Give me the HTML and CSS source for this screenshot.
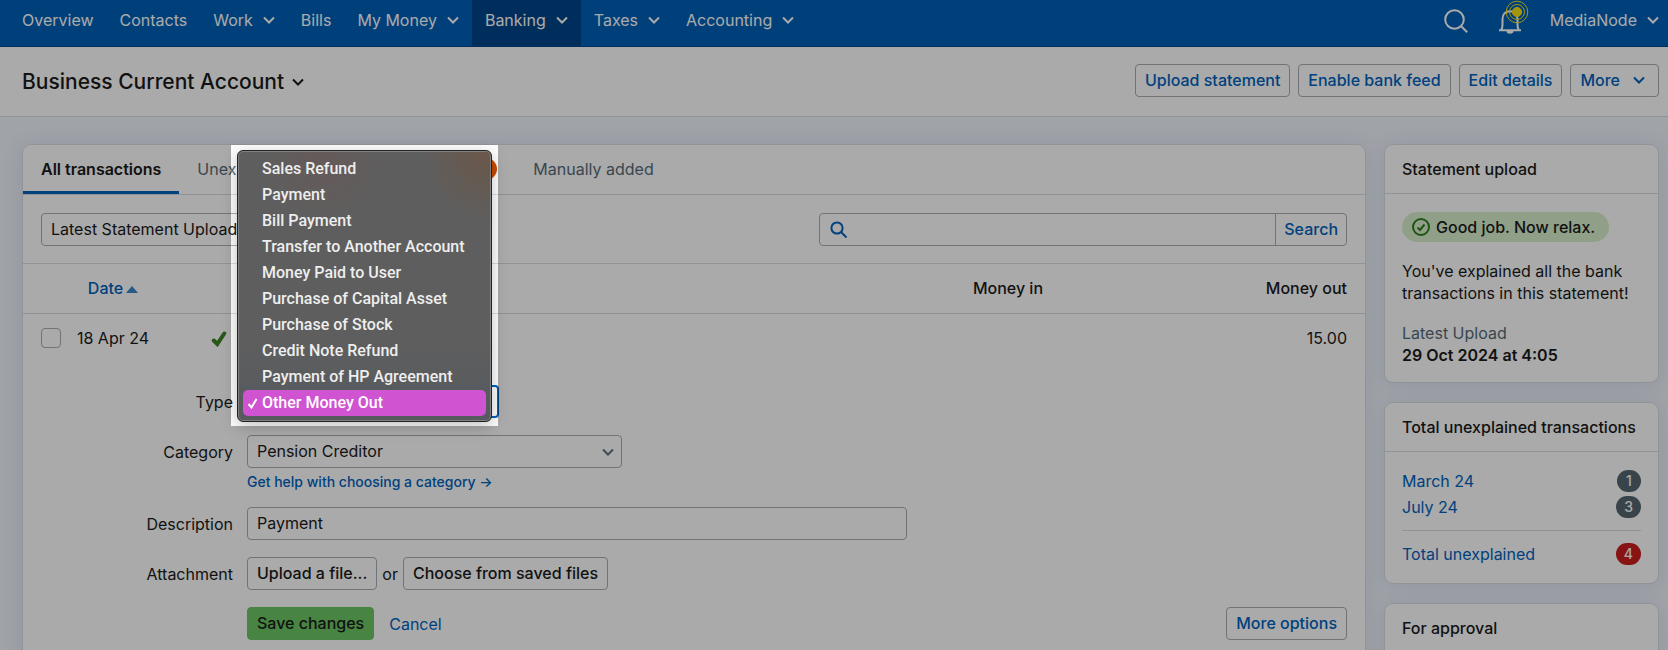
FILE: index.html
```html
<!DOCTYPE html>
<html lang="en">
<head>
    <meta charset="UTF-8">
    <meta name="viewport" content="width=device-width, initial-scale=1.0">
    <title>Business Current Account</title>
    <link rel="stylesheet" href="styles.css">
</head>
<body>
    <header class="topbar">
        <nav class="nav">
            <a href="#">Overview</a>
            <a href="#">Contacts</a>
            <a href="#">Work <svg class="chevron" viewBox="0 0 12 8"><path d="M1 1.5l5 5 5-5"/></svg></a>
            <a href="#">Bills</a>
            <a href="#">My Money <svg class="chevron" viewBox="0 0 12 8"><path d="M1 1.5l5 5 5-5"/></svg></a>
            <a href="#" class="active">Banking <svg class="chevron" viewBox="0 0 12 8"><path d="M1 1.5l5 5 5-5"/></svg></a>
            <a href="#">Taxes <svg class="chevron" viewBox="0 0 12 8"><path d="M1 1.5l5 5 5-5"/></svg></a>
            <a href="#">Accounting <svg class="chevron" viewBox="0 0 12 8"><path d="M1 1.5l5 5 5-5"/></svg></a>
        </nav>
        <div class="nav-tools">
            <button type="button" class="icon-btn" aria-label="Search">
                <svg width="24" height="24" viewBox="0 0 24 24"><circle cx="10.5" cy="10.5" r="9.3"/><path d="M17.2 17.2l6 6"/></svg>
            </button>
            <button type="button" class="icon-btn bell" aria-label="Notifications">
                <svg width="24" height="26" viewBox="0 0 24 26"><path d="M1 22.2h22M3.2 22c1.200-1.500 1.300-3.500 1.300-5.500v-5.500c0-5 3.300-7.800 7.500-7.800s7.500 2.800 7.500 7.800v5.500c0 2 .1 4 1.300 5.500"/><path class="solid" d="M8.500 23a3.500 2.800 0 0 0 7 0z"/></svg>
                <svg class="ping" width="24" height="24" viewBox="0 0 24 24"><circle class="dot" cx="12" cy="12" r="4.600"/><circle cx="12" cy="12" r="7.500"/><circle cx="12" cy="12" r="10.800"/></svg>
            </button>
            <a href="#" class="account">MediaNode <svg class="chevron" viewBox="0 0 12 8"><path d="M1 1.5l5 5 5-5"/></svg></a>
        </div>
    </header>

    <div class="page-head">
        <h1>Business Current Account <svg class="chevron" viewBox="0 0 12 8"><path d="M1 1.5l5 5 5-5"/></svg></h1>
        <div class="page-actions">
            <button type="button" class="btn">Upload statement</button>
            <button type="button" class="btn">Enable bank feed</button>
            <button type="button" class="btn">Edit details</button>
            <button type="button" class="btn dropdown">More <svg class="chevron" viewBox="0 0 12 8"><path d="M1 1.5l5 5 5-5"/></svg></button>
        </div>
    </div>

    <main class="layout">
        <section class="card">
            <div class="tabs">
                <a href="#" class="tab active">All transactions</a>
                <a href="#" class="tab unexplained">Unexplained <span class="count orange"></span></a>
                <a href="#" class="tab">Manually added</a>
            </div>

            <div class="toolbar">
                <select class="field period" aria-label="Period">
                    <option>Latest Statement Upload</option>
                </select>
                <form class="search">
                    <svg width="18" height="18" viewBox="0 0 18 18"><circle cx="7" cy="7" r="5.600"/><path d="M11 11l5.500 5.500"/></svg>
                    <input type="text" aria-label="Search transactions">
                    <button type="button">Search</button>
                </form>
            </div>

            <table class="transactions">
                <colgroup>
                    <col class="col-check">
                    <col class="col-date">
                    <col class="col-status">
                    <col>
                    <col class="col-in">
                    <col class="col-out">
                </colgroup>
                <thead>
                    <tr>
                        <th></th>
                        <th class="center"><a href="#" class="sort">Date<span class="arrow-up"></span></a></th>
                        <th></th>
                        <th></th>
                        <th class="num">Money in</th>
                        <th class="num">Money out</th>
                    </tr>
                </thead>
                <tbody>
                    <tr>
                        <td><input type="checkbox" aria-label="Select transaction"></td>
                        <td class="center">18 Apr 24</td>
                        <td class="center"><svg class="tick" width="16" height="16" viewBox="0 0 16 16"><path d="M2.800 9.500l3.500 3.500 7-10.500"/></svg></td>
                        <td></td>
                        <td></td>
                        <td class="num">15.00</td>
                    </tr>
                </tbody>
            </table>

            <form class="explain">
                <div class="row">
                    <label for="type">Type</label>
                    <div class="type-field">
                        <select id="type" class="field"><option></option></select>
                        <div class="spotlight">
                            <ul class="menu" role="listbox">
                                <li role="option">Sales Refund</li>
                                <li role="option">Payment</li>
                                <li role="option">Bill Payment</li>
                                <li role="option">Transfer to Another Account</li>
                                <li role="option">Money Paid to User</li>
                                <li role="option">Purchase of Capital Asset</li>
                                <li role="option">Purchase of Stock</li>
                                <li role="option">Credit Note Refund</li>
                                <li role="option">Payment of HP Agreement</li>
                                <li role="option" class="selected" aria-selected="true"><svg width="12" height="12" viewBox="0 0 12 12"><path d="M1.500 7l3 3.500 5-8.500"/></svg>Other Money Out</li>
                            </ul>
                        </div>
                    </div>
                </div>
                <div class="row">
                    <label for="category">Category</label>
                    <div class="category-field">
                        <div class="select-wrap">
                            <select id="category" class="field"><option>Pension Creditor</option></select>
                            <svg class="chevron" viewBox="0 0 12 8"><path d="M1 1.5l5 5 5-5"/></svg>
                        </div>
                        <a href="#" class="help">Get help with choosing a category →</a>
                    </div>
                </div>
                <div class="row">
                    <label for="description">Description</label>
                    <input type="text" id="description" class="field description" value="Payment">
                </div>
                <div class="row">
                    <label for="attachment">Attachment</label>
                    <div class="attach">
                        <button type="button" id="attachment" class="btn dark">Upload a file...</button>
                        or
                        <button type="button" class="btn dark">Choose from saved files</button>
                    </div>
                </div>
                <div class="row">
                    <span></span>
                    <div class="submit">
                        <button type="button" class="btn save">Save changes</button>
                        <a href="#">Cancel</a>
                        <button type="button" class="btn more">More options</button>
                    </div>
                </div>
            </form>
        </section>

        <aside class="sidebar">
            <section class="card">
                <h2>Statement upload</h2>
                <div class="card-body">
                    <div class="pill">
                        <svg width="18" height="18" viewBox="0 0 18 18"><circle cx="9" cy="9" r="8"/><path d="M5.500 9.500l2.500 2.500 4.500-5.500"/></svg>
                        Good job. Now relax.
                    </div>
                    <p>You've explained all the bank transactions in this statement!</p>
                    <dl>
                        <dt>Latest Upload</dt>
                        <dd>29 Oct 2024 at 4:05</dd>
                    </dl>
                </div>
            </section>
            <section class="card">
                <h2>Total unexplained transactions</h2>
                <div class="card-body">
                    <ul class="totals">
                        <li><a href="#">March 24</a><span class="count">1</span></li>
                        <li><a href="#">July 24</a><span class="count">3</span></li>
                        <li class="sum"><a href="#">Total unexplained</a><span class="count red">4</span></li>
                    </ul>
                </div>
            </section>
            <section class="card">
                <h2>For approval</h2>
                <div class="card-body"></div>
            </section>
        </aside>
    </main>
</body>
</html>
```
FILE: styles.css
```css
* {
    box-sizing: border-box;
}
body {
    margin: 0;
    height: 100vh;
    overflow: hidden;
    background-color: #f0f5fd;
    color: #1a1a1a;
    font-family: Inter, "Liberation Sans", sans-serif;
    font-size: 16px;
    line-height: 22px;
}
a {
    color: #0062bd;
    text-decoration: none;
}
button, input, select {
    font: inherit;
    color: inherit;
}
svg {
    fill: none;
    stroke: currentColor;
    stroke-width: 2;
}
.chevron {
    width: 12px;
    height: 8px;
    flex: none;
}

/* top bar */
.topbar {
    display: flex;
    justify-content: space-between;
    height: 47px;
    padding: 0 9px;
    background-color: #0060b8;
    border-bottom: 1px solid #00468a;
}
.nav, .nav-tools {
    display: flex;
}
.nav a, .account {
    display: flex;
    align-items: center;
    gap: 10px;
    padding: 0 13px 6px;
    color: #fff;
}
.nav .active {
    background-color: #00468a;
}
.nav-tools .account {
    padding-right: 0;
}
.icon-btn {
    display: flex;
    align-items: center;
    position: relative;
    padding: 0 15px 4px;
    border: 0;
    background: none;
    color: #fff;
}
.bell .solid {
    fill: #fff;
    stroke: none;
}
.bell .ping {
    position: absolute;
    top: 0;
    right: 8px;
    color: #f7e017;
    stroke-width: 1;
}
.bell .dot {
    fill: #f7e017;
}

/* account heading */
.page-head {
    display: flex;
    align-items: center;
    justify-content: space-between;
    height: 70px;
    padding: 0 9px 0 22px;
    background-color: #fff;
    border-bottom: 1px solid #d9dee6;
}
h1 {
    display: flex;
    align-items: center;
    gap: 8px;
    margin: 0;
    font-size: 21px;
    font-weight: 500;
}
.page-actions {
    display: flex;
    gap: 8px;
    padding-bottom: 2px;
}
.btn {
    display: flex;
    align-items: center;
    gap: 13px;
    height: 33px;
    padding: 0 9px 1px;
    border: 1px solid #a7afb6;
    border-radius: 4px;
    background-color: #fff;
    color: #0062bd;
    font-weight: 500;
    white-space: nowrap;
}
.btn.dark {
    color: #1a1a1a;
}
.btn.dropdown {
    padding-right: 13px;
}

/* cards */
.layout {
    display: grid;
    grid-template-columns: 1fr 275px;
    gap: 18px;
    padding: 27px 9px 27px 22px;
}
.card {
    background-color: #fff;
    border: 1px solid #d9dee6;
    border-radius: 9px;
    box-shadow: 0 2px 20px rgba(60, 80, 120, 0.12);
}
.sidebar {
    display: flex;
    flex-direction: column;
    gap: 19px;
}
.tabs {
    display: flex;
    height: 50px;
    border-bottom: 1px solid #d9dee6;
}
.tab {
    display: flex;
    align-items: center;
    justify-content: space-between;
    padding: 1px 18px 0;
    border-bottom: 3px solid transparent;
    color: #566b78;
}
.tab.active {
    border-color: #0062bd;
    color: #1a1a1a;
    font-weight: 600;
}
.tab.unexplained {
    width: 336px;
}
.count {
    min-width: 24px;
    height: 22px;
    padding: 0 8px;
    border-radius: 11px;
    background-color: #566670;
    color: #fff;
    font-size: 14px;
    font-weight: 500;
    text-align: center;
}
.count.red {
    background-color: #cc1d1d;
}
.count.orange {
    background-color: #cc4a00;
}
.toolbar {
    display: flex;
    justify-content: space-between;
    padding: 18px 18px 17px;
    border-bottom: 1px solid #d9dee6;
}
.field {
    height: 33px;
    padding: 0 9px 1px;
    border: 1px solid #a7afb6;
    border-radius: 4px;
    background-color: #fff;
    appearance: none;
}
.period {
    width: 250px;
}
.search {
    display: flex;
    align-items: center;
    width: 528px;
    max-width: 50%;
    height: 33px;
    border: 1px solid #a7afb6;
    border-radius: 4px;
    color: #0062bd;
}
.search svg {
    flex: none;
    margin-left: 10px;
}
.search input {
    flex: 1;
    min-width: 0;
    border: 0;
    background: none;
}
.search button {
    height: 31px;
    padding: 0 8px 1px;
    border: 0;
    border-left: 1px solid #a7afb6;
    background: none;
    font-weight: 500;
}

/* transactions */
.transactions {
    width: 100%;
    table-layout: fixed;
    border-collapse: collapse;
}
.col-check {
    width: 46px;
}
.col-date {
    width: 88px;
}
.col-status {
    width: 124px;
}
.col-in {
    width: 200px;
}
.col-out {
    width: 304px;
}
th, td {
    height: 49px;
    padding: 0 18px;
    font-weight: 400;
}
th {
    border-bottom: 1px solid #d9dee6;
    font-weight: 550;
}
.num {
    text-align: right;
}
.center {
    padding: 0;
    text-align: center;
}
.arrow-up {
    display: inline-block;
    margin-left: 3px;
    border: 6px solid transparent;
    border-top: 0;
    border-bottom: 7px solid #3c84cc;
    vertical-align: 1px;
}
.transactions input {
    display: block;
    width: 20px;
    height: 20px;
    margin: 0;
    border: 1px solid #a7afb6;
    border-radius: 4px;
    appearance: none;
}
.tick {
    vertical-align: middle;
    stroke: #3b8526;
    stroke-width: 4;
    stroke-linecap: round;
}

/* explanation form */
.explain {
    display: flex;
    flex-direction: column;
    gap: 17px;
    padding: 23px 18px 30px;
}
.row {
    display: grid;
    grid-template-columns: 192px 1fr;
    gap: 14px;
}
.row > label {
    padding-top: 6px;
    text-align: right;
}
.type-field {
    position: relative;
    width: 252px;
}
.type-field .field {
    width: 100%;
    border: 2px solid #0062bd;
}
.select-wrap {
    position: relative;
    width: 375px;
}
.select-wrap .field {
    width: 100%;
}
.select-wrap .chevron {
    position: absolute;
    top: 13px;
    right: 8px;
    color: #5f6f7a;
}
.help {
    display: block;
    margin-top: 6px;
    font-size: 14px;
    font-weight: 500;
    line-height: 16px;
}
.description {
    width: 60%;
}
.attach, .submit {
    display: flex;
    align-items: center;
    gap: 5px;
}
.submit a {
    margin-left: 10px;
}
.btn.save {
    border-color: #6cc664;
    background-color: #6cc664;
    color: #1a1a1a;
}
.btn.more {
    margin-left: auto;
}

/* open menu, rest of the page dimmed */
.spotlight {
    position: absolute;
    z-index: 10;
    right: 1px;
    bottom: -8px;
    width: 267px;
    padding: 5px 6px 4px;
    box-shadow: 0 0 0 3000px rgba(0, 0, 0, 0.333);
}
.menu {
    margin: 0;
    padding: 5px;
    border: 1px solid #222;
    border-radius: 6px;
    background:
        radial-gradient(circle at 100% 0, rgba(120, 80, 50, 0.5), transparent 70px),
        radial-gradient(circle at 34% 4%, rgba(120, 80, 80, 0.3), transparent 60px),
        linear-gradient(#5e5e5e 70%, #555a5e);
    box-shadow: inset 0 0 0 1px #808080, 0 4px 16px rgba(0, 0, 0, 0.25);
    color: #eee;
    font-family: Roboto, sans-serif;
    font-weight: 500;
    list-style: none;
}
.menu li {
    padding: 2px 0 2px 19px;
    border-radius: 5px;
}
.menu .selected {
    position: relative;
    background-color: #d053d2;
    color: #fff;
}
.menu svg {
    position: absolute;
    top: 7px;
    left: 4px;
}

/* sidebar */
h2 {
    margin: 0;
    padding: 13px 17px;
    border-bottom: 1px solid #d9dee6;
    font-size: 16px;
    font-weight: 550;
    white-space: nowrap;
}
.card-body {
    padding: 18px 17px;
}
.pill {
    display: inline-flex;
    align-items: center;
    gap: 6px;
    height: 30px;
    padding: 0 14px 0 10px;
    border-radius: 15px;
    background-color: #d9f0cd;
    font-weight: 500;
}
.pill svg {
    color: #2f7d1e;
}
p, dl, dd {
    margin: 0;
}
p {
    margin: 18px 0;
}
dl {
    margin-bottom: -2px;
}
dt {
    color: #566b78;
}
dd {
    font-weight: 600;
}
.totals {
    margin: 0;
    padding: 0;
    list-style: none;
}
.totals li {
    display: flex;
    align-items: center;
    justify-content: space-between;
    margin-bottom: 4px;
}
.totals .sum {
    margin: 12px 0 0;
    padding-top: 12px;
    border-top: 1px solid #d9dee6;
}
```
